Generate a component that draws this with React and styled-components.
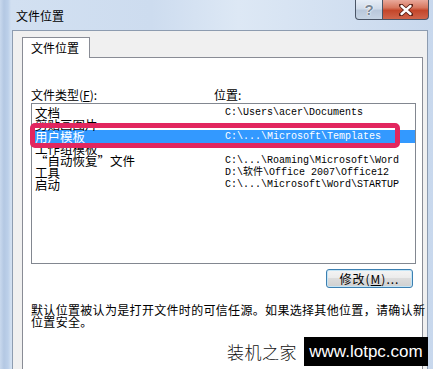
import React from "react";
import styled, { createGlobalStyle } from "styled-components";

const GlobalStyle = createGlobalStyle`
  html, body {
    margin: 0;
    padding: 0;
    background: #c4d6ec;
  }
  body {
    font-family: "Noto Sans CJK SC", "Liberation Sans", sans-serif;
    color: #000;
  }
`;

const Window = styled.div`
  width: 433px;
  height: 369px;
  overflow: hidden;
  position: relative;
  display: flex;
  flex-direction: column;
  background: linear-gradient(
    90deg,
    #c9d9ee 0px,
    #b4c8e3 4px,
    #bcd0ea 8px,
    #d2e0f1 11px,
    #cddcef 35%,
    #dde8f5 55%,
    #c8d8ed 100%
  );
`;

const TitleBar = styled.div`
  height: 30px;
  flex: none;
  display: flex;
  align-items: flex-start;
  justify-content: space-between;
`;

const Title = styled.div`
  margin: 9px 0 0 16px;
  font-size: 12px;
  line-height: 14px;
`;

const Caption = styled.div`
  display: flex;
  margin-right: 4px;
`;

const CapButton = styled.div`
  width: ${(p) => p.w}px;
  height: 20px;
  box-sizing: border-box;
  border: 1px solid #4a5566;
  border-top: none;
  border-left: ${(p) => (p.close ? "none" : "1px solid #4a5566")};
  border-radius: ${(p) => (p.close ? "0 0 4px 0" : "0 0 0 4px")};
  display: flex;
  align-items: center;
  justify-content: center;
  background: ${(p) =>
    p.close
      ? "linear-gradient(#e9a99b 0%, #d7775f 40%, #c4462a 55%, #d0654b 100%)"
      : "linear-gradient(#e6edf6 0%, #d0dbe9 45%, #b9c8db 55%, #c6d4e4 100%)"};
`;

const HelpGlyph = styled.span`
  font-family: "Liberation Sans", sans-serif;
  font-weight: bold;
  font-size: 15px;
  line-height: 15px;
  color: #7b8896;
  text-shadow: 0 0 1px #fff, 0 0 1px #fff, 0 0 2px #fff;
`;

const Client = styled.div`
  flex: 1;
  margin: 0 5px 0 12px;
  background: #f0f0f0;
  border: 1px solid #8d9cb0;
  border-bottom: none;
  padding: 6px 4px 0 9px;
  display: flex;
  flex-direction: column;
  min-height: 0;
`;

const Tab = styled.div`
  width: 68px;
  height: 21px;
  box-sizing: border-box;
  border: 1px solid #898c95;
  border-bottom: none;
  background: #fff;
  font-size: 12px;
  line-height: 19px;
  padding-left: 8px;
  margin-bottom: -1px;
  position: relative;
  z-index: 1;
`;

const Panel = styled.div`
  flex: 1;
  background: #fff;
  border: 1px solid #898c95;
  border-bottom: none;
  padding: 30px 7px 0 8px;
  display: flex;
  flex-direction: column;
`;

const HeaderRow = styled.div`
  display: grid;
  grid-template-columns: 183px 1fr;
  font-size: 12px;
  line-height: 14px;
  height: 14px;
`;

const List = styled.div`
  margin-top: 1px;
  width: 385px;
  height: 161px;
  box-sizing: border-box;
  border: 1px solid #828790;
  padding-top: 3px;
  position: relative;
`;

const Row = styled.div`
  display: grid;
  grid-template-columns: 190px 1fr;
  height: ${(p) => (p.selected ? 13 : 12)}px;
  margin-top: ${(p) => (p.selected ? -1 : 0)}px;
  padding-left: 3px;
  background: ${(p) => (p.selected ? "#3399ff" : "#fff")};
  color: ${(p) => (p.selected ? "#fff" : "#000")};
`;

const Label = styled.span`
  font-size: 12.5px;
  line-height: 12px;
  white-space: nowrap;
  align-self: end;
`;

const Path = styled.span`
  font-family: "Liberation Mono", "Noto Sans CJK SC", monospace;
  font-size: 10px;
  line-height: 12px;
  white-space: nowrap;
  align-self: end;
`;

const Highlight = styled.div`
  position: absolute;
  left: -2px;
  top: 19px;
  width: 370px;
  height: 25px;
  box-sizing: border-box;
  border: 5px solid #e2265f;
  border-radius: 5px;
  pointer-events: none;
`;

const ButtonRow = styled.div`
  display: flex;
  justify-content: flex-end;
  margin-top: 5px;
  padding-right: 2px;
`;

const Button = styled.div`
  width: 87px;
  height: 19px;
  box-sizing: border-box;
  border: 1px solid #3c7fb1;
  border-radius: 3px;
  background: linear-gradient(#f4f4f4 0%, #ececec 45%, #dcdcdc 50%, #d0d0d0 100%);
  box-shadow: inset 0 0 0 1px #c4e5f6;
  font-size: 12px;
  line-height: 17px;
  letter-spacing: 1px;
  text-align: center;
`;

const Note = styled.div`
  margin-top: 16px;
  font-size: 12px;
  line-height: 12px;
  letter-spacing: 0.32px;
  white-space: nowrap;
`;

const Watermark = styled.div`
  position: absolute;
  right: 5px;
  bottom: 3px;
  display: flex;
  align-items: center;
`;

const WatermarkName = styled.span`
  font-size: 17px;
  font-weight: 300;
  color: #111;
  margin-right: 7px;
  letter-spacing: 0.5px;
`;

const WatermarkBox = styled.span`
  width: 124px;
  height: 29px;
  background: #000;
  color: #fff;
  font-family: "Liberation Sans", sans-serif;
  font-size: 17px;
  display: flex;
  align-items: center;
  justify-content: center;
`;

const rows = [
  ["文档", "C:\\Users\\acer\\Documents"],
  ["剪贴画图片", ""],
  ["用户模板", "C:\\...\\Microsoft\\Templates"],
  ["工作组模板", ""],
  ["“自动恢复”文件", "C:\\...\\Roaming\\Microsoft\\Word"],
  ["工具", "D:\\软件\\Office 2007\\Office12"],
  ["启动", "C:\\...\\Microsoft\\Word\\STARTUP"],
];

export default function App() {
  return (
    <>
      <GlobalStyle />
      <Window>
        <TitleBar>
          <Title>文件位置</Title>
          <Caption>
            <CapButton w={28}>
              <HelpGlyph>?</HelpGlyph>
            </CapButton>
            <CapButton w={46} close>
              <svg width="14" height="12" viewBox="0 0 14 12">
                <path d="M2 1.5 L12 10.5 M12 1.5 L2 10.5" stroke="#5a1f14" strokeWidth="4.2" strokeLinecap="round" />
                <path d="M2.5 2 L11.5 10 M11.5 2 L2.5 10" stroke="#fff" strokeWidth="2.4" strokeLinecap="round" />
              </svg>
            </CapButton>
          </Caption>
        </TitleBar>
        <Client>
          <Tab>文件位置</Tab>
          <Panel>
            <HeaderRow>
              <span>
                文件类型(<u>F</u>):
              </span>
              <span>位置:</span>
            </HeaderRow>
            <List>
              {rows.map(([label, path], i) => (
                <Row key={label} selected={i === 2}>
                  <Label>{label}</Label>
                  <Path>{path}</Path>
                </Row>
              ))}
              <Highlight />
            </List>
            <ButtonRow>
              <Button>修改(<u>M</u>)...</Button>
            </ButtonRow>
            <Note>
              默认位置被认为是打开文件时的可信任源。如果选择其他位置，请确认新
              <br />
              位置安全。
            </Note>
          </Panel>
        </Client>
        <Watermark>
          <WatermarkName>装机之家</WatermarkName>
          <WatermarkBox>www.lotpc.com</WatermarkBox>
        </Watermark>
      </Window>
    </>
  );
}
